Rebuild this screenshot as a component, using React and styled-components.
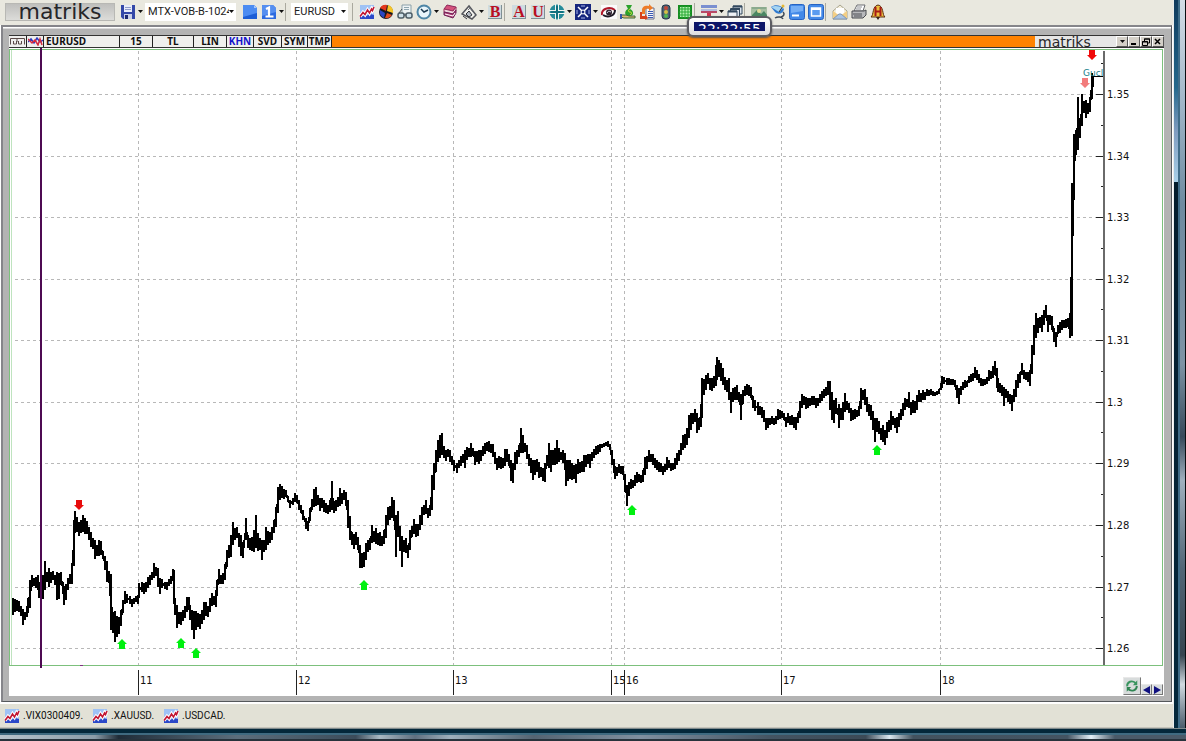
import React from 'react'
import styled, { createGlobalStyle, css } from 'styled-components'

const fonts = {
  ui: 'Roboto, "Liberation Sans", sans-serif',
  tabs: '"Noto Sans", "Open Sans", sans-serif',
  axis: '"DejaVu Sans", sans-serif',
}

const GlobalStyle = createGlobalStyle`
  body {
    margin: 0;
    background: #e9e9e0;
    font-family: ${fonts.ui};
  }
`

const Desktop = styled.div`
  display: grid;
  grid-template-columns: minmax(0, 1fr) 13px;
  grid-template-rows: auto 13px;
`

const Main = styled.main`
  display: flex;
  flex-direction: column;
  min-width: 0;
  background: #fff;
`

const RightEdge = styled.div`
  display: grid;
  grid-template-columns: 1px 4px 2px 5px 1px;
  background: #0a0d10;
`

const EdgeStrip = styled.div`
  background: ${props => props.$fill};
`

const BottomEdge = styled.div`
  grid-column: 1 / -1;
  display: grid;
  grid-template-rows: 1px 4px 2px 4px 2px;
`

const Toolbar = styled.header`
  display: flex;
  align-items: center;
  box-sizing: border-box;
  height: 25px;
  padding: 0 0 2px 5px;
  overflow: hidden;
  background: #e9e8df;
`

const buttonReset = css`
  display: flex;
  align-items: center;
  justify-content: center;
  flex: 0 0 auto;
  padding: 0;
  border: 0;
  background: none;
  color: #000;
`

const ToolButton = styled.button`
  ${buttonReset}
  width: 19px;
  height: 20px;
`

const ArrowButton = styled.button`
  ${buttonReset}
  width: 7px;
  height: 20px;
`

const Separator = styled.span`
  flex: 0 0 auto;
  box-sizing: border-box;
  width: 5px;
  height: 18px;
  border-right: 4px solid transparent;
  border-left: 1px solid #aaa99f;
  background-clip: padding-box;
`

const ToolbarLogo = styled.div`
  display: flex;
  align-items: center;
  justify-content: center;
  flex: 0 0 auto;
  box-sizing: border-box;
  width: 110px;
  height: 18px;
  margin-right: 3px;
  background: linear-gradient(#bdbdbb, #dededb);
  box-shadow: inset 0 0 0 1px #b8b8b4;
  font-family: ${fonts.axis};
  font-size: 22px;
  line-height: 18px;
  color: #26262a;
`

const ComboBox = styled.label`
  display: flex;
  align-items: center;
  flex: 0 0 auto;
  box-sizing: border-box;
  width: ${props => props.$width}px;
  height: 18px;
  margin: 0 4px 0 1px;
  padding: 0 2px 0 3px;
  background: #fff;
`

const Select = styled.select`
  appearance: none;
  flex: 1;
  min-width: 0;
  padding: 0;
  border: 0;
  overflow: hidden;
  background: none;
  font-family: ${fonts.ui};
  font-size: 11px;
  color: #222;
`

const Workspace = styled.section`
  position: relative;
  display: flex;
  flex-direction: column;
  margin: 0 1px;
  padding: 8px 7px 5px 6px;
  border: solid #85858a;
  border-width: 2px 1px 1px 2px;
  border-right-color: #55585c;
  border-bottom-color: #55585c;
  background: linear-gradient(#fff 1px, #b3b3b3 2px);
`

const TitleBar = styled.nav`
  display: flex;
  box-sizing: border-box;
  height: 13px;
  border-top: 1px solid #333;
  border-bottom: 1px solid #333;
  background: #ff8200;
`

const TitleCell = styled.button`
  ${buttonReset}
  box-sizing: border-box;
  justify-content: ${props => (props.$left ? 'flex-start' : 'center')};
  width: ${props => props.$width}px;
  height: 11px;
  padding-left: ${props => (props.$left ? 2 : 0)}px;
  border-right: 1px solid #222;
  background: #efefed;
  font-family: ${fonts.tabs};
  font-size: 10px;
  font-weight: bold;
  line-height: 11px;
  color: ${props => (props.$active ? '#1414cc' : '#111')};
`

const TitleLogo = styled.div`
  display: flex;
  align-items: center;
  box-sizing: border-box;
  width: 81px;
  height: 11px;
  margin-left: auto;
  padding-left: 3px;
  background: #e6e6e6;
  font-family: ${fonts.axis};
  font-size: 14px;
  line-height: 14px;
  color: #26262a;
`

const WindowButton = styled.button`
  ${buttonReset}
  box-sizing: border-box;
  width: 12px;
  height: 11px;
  border: 1px solid;
  border-color: #fff #555 #555 #fff;
  background: #d4d0c8;
`

const ChartPane = styled.div`
  position: relative;
  background: #fff;
`

const ChartSvg = styled.svg`
  display: block;
  width: 100%;
  height: auto;
  font-family: ${fonts.axis};
  font-size: 10px;
`

const ChartTools = styled.div`
  position: absolute;
  right: 1px;
  bottom: 1px;
  display: flex;
  align-items: flex-end;
`

const ChartButton = styled.button`
  ${buttonReset}
  box-sizing: border-box;
  width: ${props => props.$size}px;
  height: ${props => props.$size}px;
  border: 1px solid;
  border-color: #e8e8e8 #777 #777 #e8e8e8;
  background: #d8dcdc;
`

const Clock = styled.div`
  position: absolute;
  top: -11px;
  left: 684px;
  box-sizing: border-box;
  width: 85px;
  height: 21px;
  padding: 5px;
  border: 2px solid #5c5c62;
  border-radius: 6px;
  background: linear-gradient(#fff, #dcdce0);
  background-clip: padding-box;
  box-shadow: 0 1px 2px #555;
`

const ClockFace = styled.div`
  display: flex;
  justify-content: center;
  box-sizing: border-box;
  height: 9px;
  margin-top: -1px;
  padding-top: 2px;
  background: #0b1468;
`

const ClockDigits = styled.span`
  height: 5px;
  overflow: hidden;
  font-family: ${fonts.axis};
  font-size: 14px;
  line-height: 10px;
  color: #fff;
`

const TaskBar = styled.footer`
  display: flex;
  align-items: center;
  gap: 9px;
  box-sizing: border-box;
  height: 26px;
  padding-left: 4px;
  border-top: 2px solid #fff;
  border-bottom: 1px solid #c4c3ba;
  background: #e2e1d6;
`

const TaskButton = styled.button`
  ${buttonReset}
  gap: 3px;
  height: 20px;
  font-family: ${fonts.ui};
  font-size: 10px;
  color: #111;
`

const Svg = ({ children, size = 16 }) => (
  <svg width={size} height={size} viewBox="0 0 16 16" aria-hidden="true">{children}</svg>
)

const DropArrow = () => (
  <svg width="5" height="3" viewBox="0 0 5 3" aria-hidden="true"><path d="M0 0h5L2.500 3z" fill="#111" /></svg>
)

const LetterTile = ({ letter }) => (
  <Svg>
    <rect x="1" y="1" width="14" height="14" fill="#cfdce0" />
    <path d="M1 14.500h14M14.500 1v14" stroke="#7f9094" />
    <text x="8" y="13" textAnchor="middle" fontFamily="Liberation Serif, serif" fontWeight="bold" fontSize="16" fill="#b80f22">{letter}</text>
  </Svg>
)

const icons = {
  save: (
    <Svg>
      <path d="M1 1h14v14H3l-2-2z" fill="#3347a8" />
      <path d="M4 1h8v7H4z" fill="#e8ecfa" />
      <path d="M5 3.500h6M5 5.500h6" stroke="#8f9bcc" />
      <path d="M4 10h8v5H4z" fill="#c9cfe8" />
      <path d="M5 11h3v4H5z" fill="#1c2870" />
    </Svg>
  ),
  folder: (
    <Svg>
      <path d="M1 1h11l3 3v11H1z" fill="#1c5ed6" />
      <path d="M1 1h11l3 3v5L1 13z" fill="#4c8cf2" />
      <path d="M12 1v3h3z" fill="#a8c8fa" />
    </Svg>
  ),
  one: (
    <Svg>
      <path d="M1 1h11l3 3v11H1z" fill="#2c6ae0" />
      <path d="M1 1h11l3 3v4L1 12z" fill="#568ff0" />
      <path d="M5 5l3-1.500v9M4.500 12.500h8" fill="none" stroke="#fff" strokeWidth="2.200" />
    </Svg>
  ),
  chart: (
    <Svg>
      <path d="M1 1h14v14H1z" fill="#9fc2f5" />
      <path d="M1 12l3-1 3 1 4-2 4 1v4H1z" fill="#2b48c8" />
      <path d="M1 12.500l3-4 2 2 2.500-4.500 2 3 2-4 1 1.500L15 3" fill="none" stroke="#fff" strokeWidth="3.500" />
      <path d="M1 12.500l3-4 2 2 2.500-4.500 2 3 2-4 1 1.500L15 3" fill="none" stroke="#c11632" strokeWidth="1.600" />
    </Svg>
  ),
  pie: (
    <Svg>
      <circle cx="8" cy="8" r="7" fill="#17171c" />
      <path d="M8 7L2 4a7 7 0 0 1 7-3z" fill="#e5381c" />
      <path d="M9 7l1-6a7 7 0 0 1 5 8z" fill="#f6c526" />
      <path d="M9 9l5 2a7 7 0 0 1-7 3z" fill="#e04a1e" />
      <path d="M7 9l-1 5a7 7 0 0 1-4-8z" fill="#2846c4" />
    </Svg>
  ),
  glasses: (
    <Svg>
      <path d="M5 1h9v9H5z" fill="#eef3f4" stroke="#8ba0a8" />
      <path d="M7 3.500h5M7 5.500h5" stroke="#8fa6b0" />
      <rect x="1" y="9" width="6" height="5" rx="2" fill="#cfe0e8" stroke="#4c5c66" strokeWidth="1.500" />
      <rect x="9" y="9" width="6" height="5" rx="2" fill="#cfe0e8" stroke="#4c5c66" strokeWidth="1.500" />
      <path d="M2 9l3-4M7 11h2" stroke="#444f58" />
    </Svg>
  ),
  clock: (
    <Svg>
      <circle cx="8" cy="8" r="6.500" fill="#e9f5fb" stroke="#4f86a6" strokeWidth="2" />
      <path d="M5 5l3 3 4-2" fill="none" stroke="#1d3950" strokeWidth="1.500" />
    </Svg>
  ),
  books: (
    <Svg>
      <path d="M5 1l9 2-3 4-9-2z" fill="#d5527c" stroke="#8c2a5c" />
      <path d="M2 5l9 2 3-4v3l-3 4-9-2z" fill="#f0d8e0" stroke="#9b2c5a" />
      <path d="M2 8l9 2 3-4v3l-3 5-9-3z" fill="#b33a75" stroke="#6f2458" />
      <path d="M3 10l8 2 2-3" fill="none" stroke="#fff" />
    </Svg>
  ),
  house: (
    <Svg>
      <path d="M1 10l7-8 7 9-4 4z" fill="#f3f3ee" stroke="#54565c" strokeWidth="1.500" />
      <path d="M5 10l3-3 3 4-3 2zM2 12l4 3" fill="#b4bcc4" stroke="#34363c" />
      <path d="M7 6l2-2 3 4" fill="none" stroke="#6d7078" />
    </Svg>
  ),
  bold: <LetterTile letter="B" />,
  letterA: <LetterTile letter="A" />,
  letterU: <LetterTile letter="U" />,
  target: (
    <Svg>
      <circle cx="8" cy="8" r="7.500" fill="#258c9a" />
      <path d="M6.500 0v16M9.500 0v16M0 6.500h16M0 9.500h16" stroke="#f0f6f2" />
      <path d="M8 2v12M2 8h12" stroke="#10707e" strokeWidth="2" />
    </Svg>
  ),
  expand: (
    <Svg>
      <path d="M0 0h16v16H0z" fill="#16267e" />
      <path d="M3 3l4 4M13 3L9 7M3 13l4-4M13 13L9 9" stroke="#fff" strokeWidth="1.500" />
      <path d="M6 2h4M6 14h4M2 6v4M14 6v4" stroke="#a8b5ea" />
      <circle cx="8" cy="8" r="2" fill="none" stroke="#fff" />
    </Svg>
  ),
  eye: (
    <Svg>
      <path d="M0 1h16v14H0z" fill="#fbfbfb" />
      <path d="M1 11C0 5 8 2 14 6" fill="none" stroke="#b0182a" strokeWidth="2" />
      <path d="M2 11c5 3 12 1 12-5" fill="none" stroke="#1e1a26" strokeWidth="2" />
      <circle cx="8" cy="8.500" r="3" fill="#30222e" />
      <path d="M6 9c1-2 2-2 4-1" fill="none" stroke="#d7dcec" />
    </Svg>
  ),
  plant: (
    <Svg>
      <path d="M8 5L6 1h6l-2 4c4 2 4 6 1 7H7c-3-2-2-6 1-7z" fill="#2da22c" />
      <path d="M10 5c-2 1-2 3 0 3s2 2 0 3" fill="none" stroke="#e6e344" />
      <path d="M1 11h5l3 1h6v2H4l-3-1z" fill="#e2b878" stroke="#3a6738" />
      <path d="M0 10h2v5H0z" fill="#3554a8" />
    </Svg>
  ),
  transfer: (
    <Svg>
      <path d="M7 4h8v11H7z" fill="#f6f6f6" stroke="#6a6f88" />
      <path d="M9 7.500h5M9 9.500h5M9 11.500h5M9 13.500h5" stroke="#3a59b4" />
      <path d="M3 10V6c0-4 4-5 7-4V0l4 4-4 3V5C8 4 6 5 6 7v3z" fill="#ee7c28" />
      <path d="M1 8h2v4h3v-2l3 4-3 2v-1H1z" fill="#d8401c" />
    </Svg>
  ),
  traffic: (
    <Svg>
      <rect x="4" y="1" width="8" height="14" rx="3" fill="#4c6274" stroke="#24384a" />
      <circle cx="8" cy="4" r="2" fill="#c1493a" />
      <circle cx="8" cy="8" r="2" fill="#d5c044" />
      <circle cx="8" cy="12" r="2" fill="#51b850" />
    </Svg>
  ),
  grid: (
    <Svg>
      <path d="M2 2h12v12H2z" fill="#b4f0b0" stroke="#168c22" strokeWidth="2" />
      <path d="M5 2v12M8 2v12M11 2v12M2 5h12M2 8h12M2 11h12" stroke="#29a934" />
    </Svg>
  ),
  rows: (
    <Svg>
      <path d="M0 1h16v3H0z" fill="#7a8fd0" />
      <path d="M0 5h16v2H0z" fill="#b4bedd" />
      <path d="M0 8h16" stroke="#b84a68" strokeWidth="2" />
      <path d="M6 9h4v3h3l-5 4-5-4h3z" fill="#cf3550" />
    </Svg>
  ),
  windows: (
    <Svg>
      <path d="M6 2h9v8H6z" fill="#dce3ec" stroke="#32485e" />
      <path d="M3.500 4.500h9v8h-9z" fill="#dce3ec" stroke="#32485e" />
      <path d="M1 7h9v8H1z" fill="#eef1f5" stroke="#32485e" />
      <path d="M1 7.500h9M4 5h9M6 2.500h9" stroke="#32485e" strokeWidth="2" />
    </Svg>
  ),
  banknote: (
    <Svg>
      <path d="M0 3h16v10H0z" fill="#a7bfa2" />
      <path d="M1 11l5-5 4 4 3-3 3 4v2H1z" fill="#4b8763" />
      <circle cx="8" cy="7" r="2" fill="#e4dc9c" />
      <path d="M1 4h14" stroke="#6f957a" />
    </Svg>
  ),
  dish: (
    <Svg>
      <path d="M1 3c4-3 10-2 13 2-1 5-6 6-9 3z" fill="#2f7ad0" />
      <path d="M1 3l8 5 4-4C9 2 5 1 1 3z" fill="#a7d5f2" />
      <path d="M9 8l4-6" stroke="#333" />
      <path d="M5 14c3-2 7-1 8 1M13 8c2 2 1 4-2 5" fill="none" stroke="#3c4856" strokeWidth="1.500" />
      <circle cx="13" cy="2" r="1.500" fill="#e4b834" />
    </Svg>
  ),
  minimize: (
    <Svg>
      <rect x="0.500" y="0.500" width="15" height="15" rx="2" fill="#4389e8" stroke="#2763c2" />
      <path d="M2 2h12v5L2 9z" fill="#75aef5" />
      <path d="M3 11.500h7" stroke="#fff" strokeWidth="2" />
    </Svg>
  ),
  maximize: (
    <Svg>
      <rect x="0.500" y="0.500" width="15" height="15" rx="2" fill="#4389e8" stroke="#2763c2" />
      <rect x="3.500" y="4" width="9" height="8" fill="#5a9bf0" stroke="#fff" strokeWidth="1.500" />
      <path d="M3 5h10" stroke="#fff" strokeWidth="2" />
    </Svg>
  ),
  mail: (
    <Svg>
      <path d="M1 7l7-6 7 6v8H1z" fill="#f4efdc" stroke="#a8a48e" />
      <path d="M4 4h8v6H4z" fill="#fff" />
      <path d="M1 7l7 5 7-5v8H1z" fill="#f4cf84" />
      <path d="M1 15l6-5h2l6 5z" fill="#a9c4e4" stroke="#8298b4" />
    </Svg>
  ),
  printer: (
    <Svg>
      <path d="M6 1h8l-2 6H3z" fill="#fff" stroke="#6a6c70" />
      <path d="M6 3h5M5 5h5" stroke="#8d8f94" />
      <path d="M1 7h12l2-1v5l-3 3H1z" fill="#b8b9bc" stroke="#47494e" />
      <path d="M2 10h9M3 12h8" stroke="#4c4e54" />
    </Svg>
  ),
  bell: (
    <Svg>
      <path d="M1 13c3-2 1-11 7-12 6 1 4 10 7 12z" fill="#ebbd3c" stroke="#5c2d12" />
      <path d="M5.500 3v9M10.500 3v9M5 7.500h6" stroke="#a81a18" strokeWidth="2" />
      <path d="M6 13h4l-2 3z" fill="#3b2018" />
    </Svg>
  ),
  refresh: (
    <Svg size={14}>
      <path d="M2.500 8.500C2 3 8 1 12 4.500" fill="none" stroke="#38945e" strokeWidth="2.200" />
      <path d="M14 1.500V7H9z" fill="#38945e" />
      <path d="M13.500 8c0 5-6 7-10 3.500" fill="none" stroke="#2f8552" strokeWidth="2.200" />
      <path d="M2 14.500V9h5z" fill="#2f8552" />
    </Svg>
  ),
}

// An icon name with a trailing "+" has a drop-down arrow, "|" is a separator.
const tools = [
  '|', 'chart', 'pie', 'glasses', 'clock+', 'books', 'house+', 'bold',
  '|', 'letterA', 'letterU', 'target+', 'expand+', 'eye', 'plant', 'transfer', 'traffic', 'grid',
  '|', 'rows+', 'windows',
  '|', 'banknote', 'dish', 'minimize', 'maximize',
  '|', 'mail', 'printer', 'bell',
]

const titleCells = [
  { label: 'EURUSD', width: 76, left: true },
  { label: '15', width: 33 },
  { label: 'TL', width: 41 },
  { label: 'LIN', width: 33 },
  { label: 'KHN', width: 27, active: true },
  { label: 'SVD', width: 28 },
  { label: 'SYM', width: 26 },
  { label: 'TMP', width: 24 },
]

const priceLabels = ['1.35', '1.34', '1.33', '1.32', '1.31', '1.3', '1.29', '1.28', '1.27', '1.26']
const priceY = [94, 156, 217, 279, 340, 402, 463, 525, 587, 648]

const days = [
  { label: '11', x: 138 },
  { label: '12', x: 296 },
  { label: '13', x: 453 },
  { label: '15', x: 611 },
  { label: '16', x: 624 },
  { label: '17', x: 781 },
  { label: '18', x: 940 },
]

const signals = [
  { x: 79, y: 500, down: true, color: '#e80c0c' },
  { x: 1092, y: 50, down: true, color: '#f00808' },
  { x: 1085, y: 78, down: true, color: '#f27c7c' },
  { x: 122, y: 639 },
  { x: 181, y: 638 },
  { x: 196, y: 648 },
  { x: 364, y: 580 },
  { x: 632, y: 505 },
  { x: 877, y: 445 },
]

// x, high, low
const bars = `
13 598 615,15 599 612,17 600 611,19 601 612,21 606 616,23 609 625,25 612 620,27 606 617,28 598 613,30 580 608,
32 575 587,34 578 586,36 577 588,38 575 590,39 582 598,41 580 598,43 575 599,45 561 590,47 572 582,49 568 587,
51 572 583,53 571 580,55 575 585,57 572 600,59 573 599,61 572 585,63 582 594,64 586 605,66 584 600,68 578 590,
70 574 584,72 563 584,74 520 566,75 511 533,77 517 532,79 522 536,81 520 533,83 515 532,85 518 534,87 521 534,
89 527 540,91 532 547,93 538 549,95 540 559,97 545 556,99 540 556,101 541 555,103 551 559,105 556 570,107 561 582,
109 571 583,111 574 630,113 612 633,115 611 642,117 616 637,119 617 634,121 610 626,123 600 613,125 591 604,
127 594 603,130 596 604,132 599 607,134 598 604,136 596 602,138 597 604,139 583 598,142 582 592,144 583 594,
146 582 592,148 577 588,150 575 585,152 572 580,154 563 578,156 567 576,158 568 587,160 578 594,162 579 588,
165 582 589,167 582 590,169 579 586,171 576 584,173 569 580,174 570 604,175 599 615,177 605 628,179 612 624,
181 612 625,183 610 621,185 606 618,187 597 612,189 597 610,190 605 620,192 610 630,194 611 639,196 611 630,
198 613 627,200 614 629,202 610 624,204 602 620,206 602 616,208 606 617,210 598 612,212 593 606,214 596 605,
216 590 607,217 580 596,219 569 584,221 575 584,223 573 584,225 564 580,227 550 567,229 545 558,231 535 557,
233 522 545,235 528 540,237 527 538,239 533 547,241 535 556,243 542 558,244 540 548,246 518 540,248 535 548,
250 538 550,252 537 551,254 530 552,256 515 548,258 533 551,260 538 550,262 540 560,264 540 552,266 527 550,
268 531 545,270 532 543,272 527 540,274 520 533,276 507 527,278 487 513,280 484 500,282 486 498,284 489 499,
286 490 497,288 496 502,290 500 508,293 498 505,295 493 502,297 495 503,299 500 510,301 505 513,303 510 520,
306 518 529,308 521 531,310 508 521,312 499 510,314 489 507,316 487 506,318 495 505,320 498 511,322 498 508,
324 500 512,326 503 513,328 505 514,330 500 512,332 481 510,334 501 513,336 500 511,338 497 507,340 488 506,
342 493 504,344 490 500,346 492 506,348 500 528,350 516 540,352 532 545,354 534 549,356 532 545,358 537 550,
360 545 568,362 553 568,364 552 567,366 543 560,368 540 552,370 538 550,372 525 543,374 531 542,376 528 544,
378 533 545,380 532 546,382 536 546,384 530 544,386 515 538,388 507 525,390 506 520,392 497 518,394 500 521,
396 515 557,398 511 537,400 526 551,402 536 567,404 540 552,406 538 553,408 545 558,410 530 550,412 526 537,
414 519 534,416 524 537,418 524 536,420 515 530,422 507 525,424 505 515,426 500 514,428 508 518,430 505 516,
432 475 510,434 463 490,436 450 472,438 440 462,440 435 458,442 433 455,444 446 458,446 450 461,448 449 457,
450 450 462,452 456 465,454 460 471,457 463 473,459 460 468,461 456 466,463 454 463,465 450 468,467 447 460,
469 448 457,471 443 457,473 448 456,475 451 465,477 451 462,479 450 464,481 450 461,483 446 456,485 443 454,
487 442 451,489 441 452,491 444 453,493 444 457,495 452 464,497 458 470,499 456 468,501 457 469,503 458 468,
505 449 466,507 449 462,509 454 466,511 460 481,513 463 483,515 452 470,517 450 464,519 445 457,521 428 453,
523 435 453,525 443 452,527 445 459,529 454 466,531 458 473,533 460 480,535 460 475,537 459 472,539 462 478,
541 467 477,543 468 481,545 463 482,547 455 466,549 443 468,551 450 472,553 450 465,555 448 465,557 440 464,
559 448 462,561 452 460,563 450 463,565 453 470,566 460 486,568 460 481,570 460 479,572 463 480,574 465 479,
576 464 483,578 459 474,580 462 473,582 461 472,584 455 472,586 455 467,588 454 464,590 454 468,592 452 461,
594 449 458,596 446 455,598 445 454,600 444 452,602 444 448,604 443 447,606 442 446,608 441 447,610 444 450,
612 450 465,614 459 473,615 466 479,617 467 476,619 464 473,621 466 474,623 466 475,625 474 492,627 485 506,
629 482 496,631 479 489,633 480 488,635 475 486,637 472 483,639 474 482,641 475 483,643 470 482,645 457 475,
647 456 469,649 450 462,651 454 462,653 454 465,655 458 468,657 460 470,659 462 472,661 463 472,663 466 475,
665 464 472,667 457 470,669 460 468,671 463 471,673 463 470,675 458 469,677 453 465,679 450 461,681 443 455,
683 435 450,685 434 448,687 428 445,689 415 438,691 413 430,693 413 424,695 409 422,697 413 433,699 418 430,
701 404 427,702 378 418,704 379 395,706 375 390,708 373 384,710 378 390,712 378 391,714 376 388,716 365 386,
717 357 380,719 360 377,721 363 381,723 368 385,725 377 390,727 380 392,729 378 400,731 392 413,733 388 402,
735 387 400,737 385 400,739 392 402,741 394 420,743 390 404,745 386 396,747 384 395,749 385 396,751 387 398,
753 396 408,755 400 411,758 402 415,760 406 415,762 407 418,764 410 422,766 418 430,768 418 428,770 418 425,
772 416 424,774 418 425,776 416 424,778 409 420,780 410 419,782 411 418,784 413 420,786 417 427,788 413 423,
790 416 425,792 415 425,794 417 428,796 417 430,798 413 423,800 401 418,802 394 408,804 396 405,806 397 409,
808 398 408,810 398 406,812 396 405,814 396 405,816 398 408,818 398 406,820 394 403,822 391 401,824 389 398,
826 387 396,828 381 395,830 381 410,832 392 420,834 400 423,836 398 414,839 404 428,841 408 420,843 402 420,
845 393 412,847 401 410,849 403 413,851 408 421,853 410 420,855 409 419,857 410 417,859 406 416,861 388 409,
863 390 400,865 389 405,867 397 412,869 404 416,871 405 420,873 411 430,875 418 442,877 418 432,879 421 434,
881 428 440,883 425 442,885 430 445,887 422 438,889 420 432,891 411 430,893 416 425,895 418 428,897 417 433,
899 413 427,901 409 420,903 403 416,905 398 410,907 399 407,909 392 408,911 402 415,913 400 413,915 401 413,
917 395 410,919 390 402,921 393 402,923 390 400,925 392 400,927 389 396,929 390 396,931 389 395,933 391 396,
935 392 396,937 391 395,939 389 394,941 383 390,942 376 388,944 377 384,947 378 385,949 378 385,951 379 385,
953 379 385,955 380 387,957 385 398,959 388 404,961 386 395,963 382 390,965 380 388,967 381 387,969 376 383,
971 374 382,973 373 381,975 367 378,977 370 380,979 374 383,981 378 386,983 379 386,985 379 385,987 377 384,
989 370 381,991 371 379,993 366 378,995 361 375,997 368 388,998 378 392,1000 383 393,1002 385 396,1004 387 406,
1006 389 398,1008 391 402,1010 394 404,1012 395 411,1014 389 402,1016 380 397,1018 374 388,1020 372 383,
1022 363 375,1024 370 379,1026 372 380,1028 372 382,1030 370 386,1032 345 374,1034 325 355,1036 313 338,
1038 318 333,1040 317 328,1042 315 332,1044 310 325,1046 305 318,1048 315 332,1050 315 325,1052 316 330,
1054 328 342,1056 332 347,1058 325 334,1060 322 333,1062 320 330,1064 320 328,1066 319 328,1068 318 327,
1070 325 338,1072 183 336,1074 134 200,1076 130 155,1078 97 150,1080 118 138,1082 94 126,1084 101 113,
1086 100 118,1088 103 114,1090 97 112,1092 73 99,1093 76 87
`.trim().split(',').map(row => row.trim().split(' ').map(Number))

const barPath = bars.map(([x, high, low]) => `M${x} ${high}V${low}`).join('')
const linkPath = bars.map(([x, high, low]) => `${x},${(high + low) / 2}`).join(' ')

const Signal = ({ x, y, down, color = '#00f010' }) => (
  <path
    transform={`translate(${x} ${y})${down ? ' translate(0 10) scale(1 -1)' : ''}`}
    d="M0 0l5 5h-2v5h-6v-5h-2z"
    fill={color}
  />
)

const Chart = () => (
  <ChartSvg viewBox="9 48 1155 648" role="img" aria-label="EURUSD 15">
    <g fill="none" shapeRendering="crispEdges">
      <path d="M9.500 49.500H1162.500V665.500H9.500z" stroke="#7cc07c" />
      <path d="M11.500 50V665" stroke="#bfe3bf" />
      {priceY.map(y => (
        <path key={y} d={`M15 ${y}.5H1096`} stroke="#b8b8b8" strokeDasharray="3 3" />
      ))}
      {days.map(({ x }) => (
        <path key={x} d={`M${x}.5 51V665`} stroke="#b8b8b8" strokeDasharray="3 3" />
      ))}
      {priceY.map(y => (
        <path key={y} d={`M1096 ${y}.5H1104M1101 ${y - 31}.5H1104`} stroke="#222" />
      ))}
      <path d="M1104 51V665" stroke="#6a6a6a" strokeWidth="2" />
      {days.map(({ x }) => (
        <path key={x} d={`M${x}.5 670V695`} stroke="#222" />
      ))}
      <path d="M80 665.500h3" stroke="#803080" />
      <path d={barPath} stroke="#000" strokeWidth="2" />
      <polyline points={linkPath} stroke="#000" strokeWidth="2" />
      <path d="M1091 76.500h12" stroke="#000" />
      <path d="M41 48V668" stroke="#4d0a52" strokeWidth="2" />
    </g>
    {signals.map(signal => <Signal key={signal.x} {...signal} />)}
    <text x="1083" y="76" fontSize="9" fill="#18818c">Gucl</text>
    {priceLabels.map((label, i) => (
      <text key={label} x="1107" y={priceY[i] + 4} fill="#111">{label}</text>
    ))}
    {days.map(({ label, x }) => (
      <text key={label} x={x + 2} y="684" fill="#111">{label}</text>
    ))}
  </ChartSvg>
)

const Tool = ({ name }) => {
  if (name === '|') {
    return <Separator />
  }
  const icon = name.replace('+', '')
  return (
    <>
      <ToolButton aria-label={icon}>{icons[icon]}</ToolButton>
      {name.endsWith('+') && <ArrowButton aria-label={`${icon} menu`}><DropArrow /></ArrowButton>}
    </>
  )
}

const Combo = ({ label, value, width }) => (
  <ComboBox $width={width}>
    <Select aria-label={label} defaultValue={value}>
      <option>{value}</option>
    </Select>
    <DropArrow />
  </ComboBox>
)

const App = () => (
  <>
    <GlobalStyle />
    <Desktop>
      <Main>
        <Toolbar>
          <ToolbarLogo>matriks</ToolbarLogo>
          <Tool name="save+" />
          <Combo label="Workspace" value="MTX-VOB-B-1024" width={91} />
          <Tool name="folder" />
          <Tool name="one+" />
          <Separator />
          <Combo label="Symbol" value="EURUSD" width={57} />
          {tools.map((name, i) => <Tool key={i} name={name} />)}
        </Toolbar>
        <Workspace>
          <Clock><ClockFace><ClockDigits>22:22:55</ClockDigits></ClockFace></Clock>
          <TitleBar>
            <TitleCell $width={18} aria-label="ruler">
              <svg width="15" height="9" viewBox="0 0 15 9" aria-hidden="true">
                <path d="M.5 1.500h14v6M.5 1.500v6M3.500 4v3h3V4M8.500 4v3h3V4M7 2v3" fill="none" stroke="#5a4a48" />
              </svg>
            </TitleCell>
            <TitleCell $width={17} aria-label="indicators">
              <svg width="15" height="9" viewBox="0 0 15 9" aria-hidden="true">
                <path d="M0 5l3-3 3 4 3-5 3 4 3-2" fill="none" stroke="#2b3cc0" strokeWidth="1.500" />
                <path d="M0 2l4 4 3-3 3 5 2-6 2 6" fill="none" stroke="#d62a3c" strokeWidth="1.500" />
              </svg>
            </TitleCell>
            {titleCells.map(({ label, width, left, active }) => (
              <TitleCell key={label} $width={width} $left={left} $active={active}>{label}</TitleCell>
            ))}
            <TitleLogo>matriks</TitleLogo>
            <WindowButton aria-label="menu"><DropArrow /></WindowButton>
            <WindowButton aria-label="minimize">
              <svg width="8" height="7" viewBox="0 0 8 7"><path d="M1 6h5" stroke="#000" strokeWidth="2" /></svg>
            </WindowButton>
            <WindowButton aria-label="restore">
              <svg width="8" height="8" viewBox="0 0 8 8">
                <path d="M2.500 3V1h5v4h-2M.5 3.500h5v4h-5z" fill="none" stroke="#000" />
                <path d="M2 1h6M0 4h6" stroke="#000" />
              </svg>
            </WindowButton>
            <WindowButton aria-label="close">
              <svg width="8" height="7" viewBox="0 0 8 7"><path d="M1 1l5 5M6 1L1 6" stroke="#000" strokeWidth="1.500" /></svg>
            </WindowButton>
          </TitleBar>
          <ChartPane>
            <Chart />
            <ChartTools>
              <ChartButton $size={18} aria-label="refresh">{icons.refresh}</ChartButton>
              <ChartButton $size={11} aria-label="scroll left">
                <svg width="7" height="8" viewBox="0 0 7 8"><path d="M7 0v8L0 4z" fill="#101080" /></svg>
              </ChartButton>
              <ChartButton $size={11} aria-label="scroll right">
                <svg width="7" height="8" viewBox="0 0 7 8"><path d="M0 0v8l7-4z" fill="#101080" /></svg>
              </ChartButton>
            </ChartTools>
          </ChartPane>
        </Workspace>
        <TaskBar>
          {['.VIX0300409.', '.XAUUSD.', '.USDCAD.'].map(name => (
            <TaskButton key={name}>{icons.chart}{name}</TaskButton>
          ))}
        </TaskBar>
      </Main>
      <RightEdge>
        <EdgeStrip $fill="#e8ecec" />
        <EdgeStrip $fill="linear-gradient(#0f3a5c, #24688c 12%, #7f9cc0 18%, #a8d0e8 25%, #031c2c 25%, #04283c)" />
        <EdgeStrip $fill="#3f6c88" />
        <EdgeStrip $fill="linear-gradient(#d4dde6, #9db4c6 15%, #6f8ba0 28%, #7d93a4 50%, #36495a 60%, #9fb0be 66%, #526676 78%, #35444f 90%, #d0dae0 94%, #4a5c6b)" />
      </RightEdge>
      <BottomEdge>
        <EdgeStrip $fill="#7f8a8c" />
        <EdgeStrip $fill="#04283a" />
        <EdgeStrip $fill="#3f6a80" />
        <EdgeStrip $fill="linear-gradient(90deg, #b8c4cc, #8c9ca8 8%, #1f2c38 10%, #5c6e7c 20%, #3c4c5a 30%, #a8b8c2 32%, #607080 35%, #9fb0bc 38%, #546472 45%, #8090a0 54%, #445462 65%, #3c4a56 73%, #dce8f0 75%, #43525e 77%, #445462 90%, #e4f0f8 92%, #4a5a68 94%)" />
        <EdgeStrip $fill="#28333c" />
      </BottomEdge>
    </Desktop>
  </>
)

export default App
